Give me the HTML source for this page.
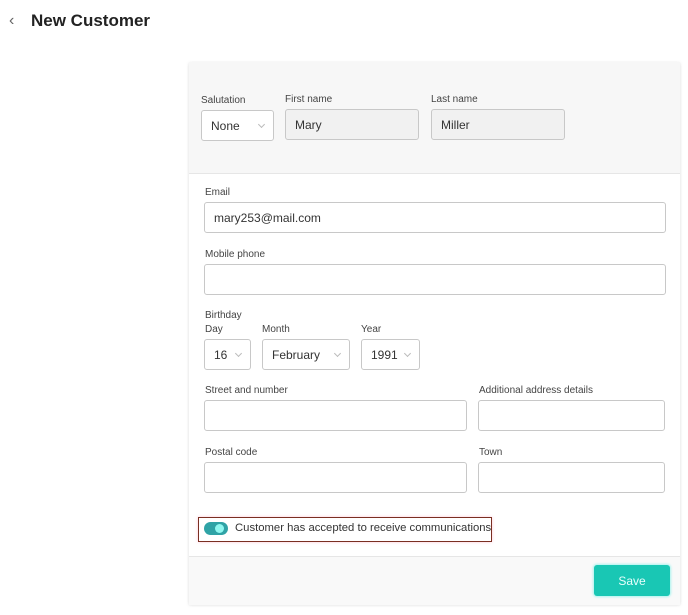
<!DOCTYPE html>
<html><head><meta charset="utf-8"><style>
body{margin:0;width:688px;height:615px;background:#fff;font-family:"Liberation Sans",sans-serif;position:relative;overflow:hidden;color:#333}
.a{position:absolute}
.lbl{position:absolute;font-size:10px;color:#444}
.box{position:absolute;border:1px solid #c8c8c8;border-radius:3px;background:#fff;box-sizing:border-box;font-size:12px;color:#333;padding-left:9px;display:flex;align-items:center}
.gray{background:#f1f1f1}
.chev{position:absolute;right:9px;top:50%;margin-top:-4px;width:4px;height:4px;border-right:1px solid #bbb;border-bottom:1px solid #bbb;transform:rotate(45deg)}
</style></head><body>
<div class="a" style="left:9px;top:12px;font-size:16px;color:#666">‹</div>
<div class="a" style="left:31px;top:11px;font-size:17px;font-weight:bold;color:#222">New Customer</div>

<div class="a" style="left:189px;top:62px;width:491px;height:542px;background:#fff;box-shadow:0 1px 3px rgba(0,0,0,.15)"></div>
<div class="a" style="left:189px;top:62px;width:491px;height:111px;background:#f7f7f7;border-bottom:1px solid #e6e6e6"></div>
<div class="a" style="left:189px;top:556px;width:491px;height:48px;background:#f9f9f9;border-top:1px solid #e6e6e6"></div>

<div class="lbl" style="left:201px;top:95px">Salutation</div>
<div class="box" style="left:201px;top:110px;width:73px;height:31px">None<span class="chev"></span></div>
<div class="lbl" style="left:285px;top:94px">First name</div>
<div class="box gray" style="left:285px;top:109px;width:134px;height:31px">Mary</div>
<div class="lbl" style="left:431px;top:94px">Last name</div>
<div class="box gray" style="left:431px;top:109px;width:134px;height:31px">Miller</div>

<div class="lbl" style="left:205px;top:187px">Email</div>
<div class="box" style="left:204px;top:202px;width:462px;height:31px">mary253@mail.com</div>
<div class="lbl" style="left:205px;top:249px">Mobile phone</div>
<div class="box" style="left:204px;top:264px;width:462px;height:31px"></div>

<div class="lbl" style="left:205px;top:310px">Birthday</div>
<div class="lbl" style="left:205px;top:324px">Day</div>
<div class="box" style="left:204px;top:339px;width:47px;height:31px">16<span class="chev"></span></div>
<div class="lbl" style="left:262px;top:324px">Month</div>
<div class="box" style="left:262px;top:339px;width:88px;height:31px">February<span class="chev"></span></div>
<div class="lbl" style="left:361px;top:324px">Year</div>
<div class="box" style="left:361px;top:339px;width:59px;height:31px">1991<span class="chev"></span></div>

<div class="lbl" style="left:205px;top:385px">Street and number</div>
<div class="box" style="left:204px;top:400px;width:263px;height:31px"></div>
<div class="lbl" style="left:479px;top:385px">Additional address details</div>
<div class="box" style="left:478px;top:400px;width:187px;height:31px"></div>
<div class="lbl" style="left:205px;top:447px">Postal code</div>
<div class="box" style="left:204px;top:462px;width:263px;height:31px"></div>
<div class="lbl" style="left:479px;top:447px">Town</div>
<div class="box" style="left:478px;top:462px;width:187px;height:31px"></div>

<div class="a" style="left:198px;top:517px;width:294px;height:25px;border:1.5px solid #7a2f22;box-sizing:border-box;box-shadow:0 0 3px rgba(255,120,160,.4)"></div>
<div class="a" style="left:204px;top:522px;width:24px;height:13px;border-radius:7px;background:#2fa3a6"></div>
<div class="a" style="left:215px;top:524px;width:9px;height:9px;border-radius:50%;background:#8ff7f0"></div>
<div class="a" style="left:235px;top:522px;font-size:11.3px;color:#333;white-space:nowrap">Customer has accepted to receive communications</div>

<div class="a" style="left:594px;top:565px;width:76px;height:31px;border-radius:3px;background:#19c7b4;box-shadow:0 0 2px 1px #a8f3ee;color:#e8fffc;font-size:12px;display:flex;align-items:center;justify-content:center">Save</div>
</body></html>
